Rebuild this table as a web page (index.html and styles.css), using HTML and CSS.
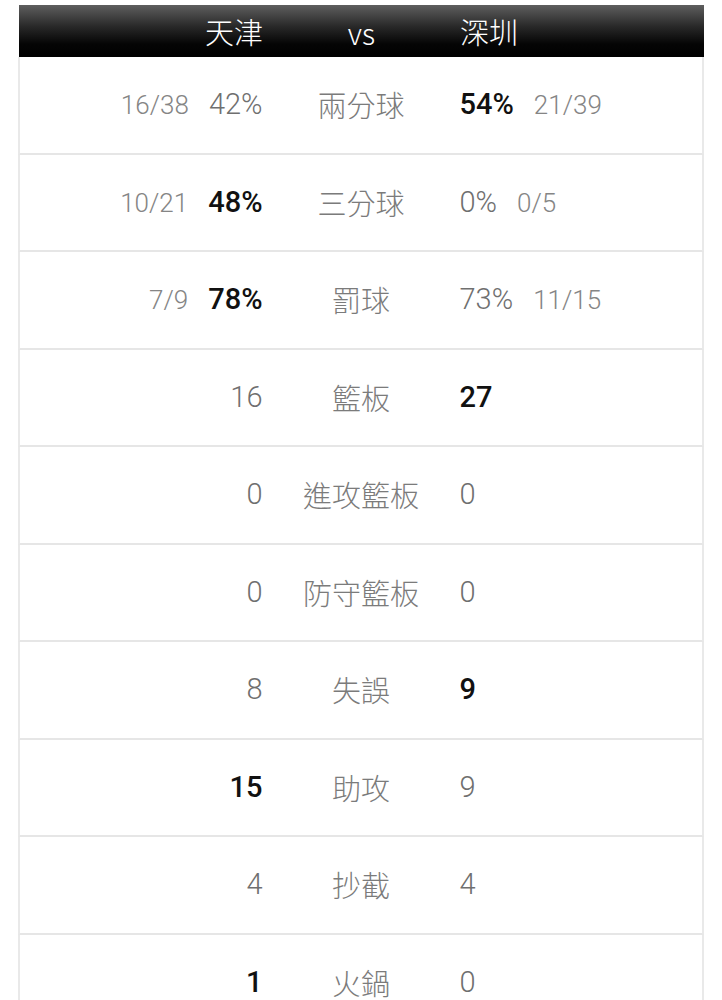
FILE: index.html
```html
<!DOCTYPE html>
<html lang="zh-Hant">
<head>
<meta charset="utf-8">
<title>天津 vs 深圳</title>
<link rel="stylesheet" href="styles.css">
</head>
<body>
<div class="board">
  <div class="head">
    <div class="side left"><span class="team">天津</span></div>
    <div class="mid vs">vs</div>
    <div class="side right"><span class="team">深圳</span></div>
  </div>

  <div class="row">
    <div class="side left"><span class="frac">16/38</span><span class="val">42%</span></div>
    <div class="mid">兩分球</div>
    <div class="side right"><span class="val win">54%</span><span class="frac">21/39</span></div>
  </div>
  <div class="row">
    <div class="side left"><span class="frac">10/21</span><span class="val win">48%</span></div>
    <div class="mid">三分球</div>
    <div class="side right"><span class="val">0%</span><span class="frac">0/5</span></div>
  </div>
  <div class="row">
    <div class="side left"><span class="frac">7/9</span><span class="val win">78%</span></div>
    <div class="mid">罰球</div>
    <div class="side right"><span class="val">73%</span><span class="frac">11/15</span></div>
  </div>
  <div class="row">
    <div class="side left"><span class="val">16</span></div>
    <div class="mid">籃板</div>
    <div class="side right"><span class="val win">27</span></div>
  </div>
  <div class="row">
    <div class="side left"><span class="val">0</span></div>
    <div class="mid">進攻籃板</div>
    <div class="side right"><span class="val">0</span></div>
  </div>
  <div class="row">
    <div class="side left"><span class="val">0</span></div>
    <div class="mid">防守籃板</div>
    <div class="side right"><span class="val">0</span></div>
  </div>
  <div class="row">
    <div class="side left"><span class="val">8</span></div>
    <div class="mid">失誤</div>
    <div class="side right"><span class="val win">9</span></div>
  </div>
  <div class="row">
    <div class="side left"><span class="val win">15</span></div>
    <div class="mid">助攻</div>
    <div class="side right"><span class="val">9</span></div>
  </div>
  <div class="row">
    <div class="side left"><span class="val">4</span></div>
    <div class="mid">抄截</div>
    <div class="side right"><span class="val">4</span></div>
  </div>
  <div class="row">
    <div class="side left"><span class="val win">1</span></div>
    <div class="mid">火鍋</div>
    <div class="side right"><span class="val">0</span></div>
  </div>
</div>
</body>
</html>
```

FILE: styles.css
```css
html, body {
  margin: 0;
  padding: 0;
  background: #ffffff;
}

body {
  font-family: "Roboto", "Liberation Sans", "Noto Sans CJK TC", sans-serif;
}

.board {
  margin: 5px 18px 0 18px;
  display: flex;
  flex-direction: column;
}

.head {
  display: grid;
  grid-template-columns: 1fr 197px 1fr;
  align-items: center;
  height: 52px;
  margin: 0 0 0 1px;
  background: linear-gradient(#5e5e5e 0%, #2a2a2a 40%, #050505 75%, #000 100%);
  color: #ffffff;
}

.team {
  font-family: "Noto Sans CJK TC", sans-serif;
  font-size: 29px;
  font-weight: 300;
  line-height: 1;
}

.vs {
  font-family: "Roboto", "Liberation Sans", sans-serif;
  font-size: 22px;
  text-align: center;
  line-height: 1;
  padding-top: 2px;
}

.row {
  display: grid;
  grid-template-columns: 1fr 197px 1fr;
  align-items: center;
  height: 95.5px;
  border-left: 2px solid #e9e9e9;
  border-right: 2px solid #e9e9e9;
  border-bottom: 2px solid #e6e6e6;
}

.side {
  display: flex;
  align-items: baseline;
  gap: 20px;
}

.left {
  justify-content: flex-end;
}

.right {
  justify-content: flex-start;
}

.mid {
  text-align: center;
  font-family: "Noto Sans CJK TC", sans-serif;
  font-size: 29px;
  font-weight: 300;
  color: #7b7b7b;
  line-height: 1;
}

.head .mid {
  color: #ffffff;
}

.val {
  font-size: 29px;
  font-weight: 300;
  color: #6f6f6f;
  line-height: 1;
}

.val.win {
  color: #111111;
  font-weight: 500;
}

.frac {
  font-size: 26px;
  font-weight: 300;
  color: #858585;
  line-height: 1;
}
```
